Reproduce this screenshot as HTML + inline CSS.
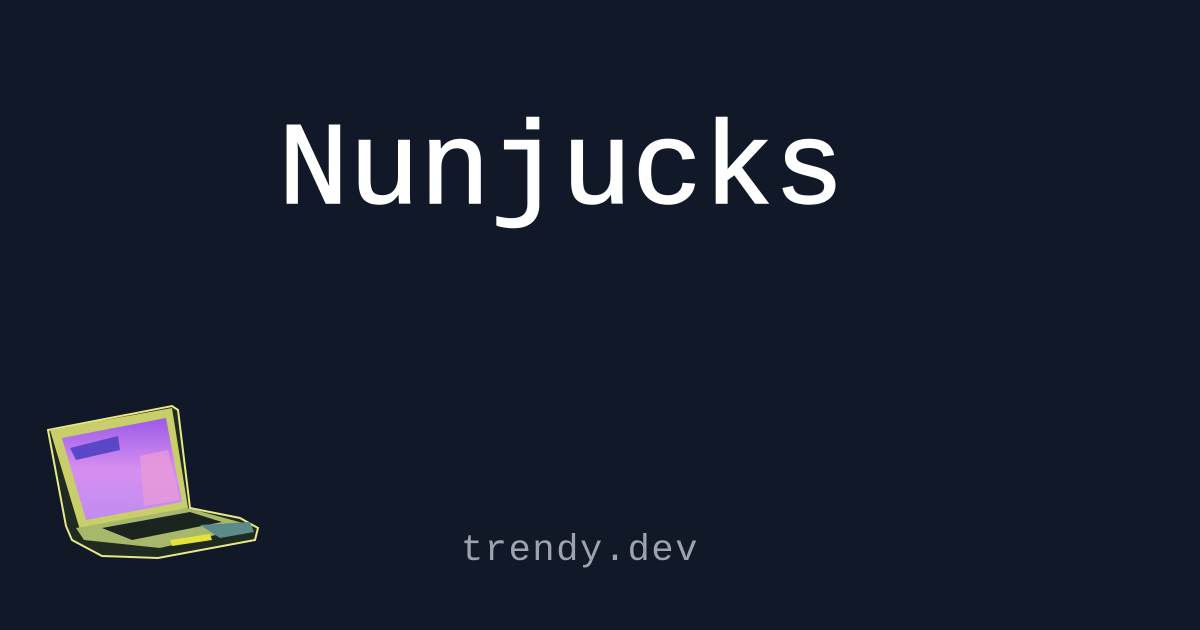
<!DOCTYPE html>
<html><head><style>
html,body{margin:0;padding:0;}
body{width:1200px;height:630px;background:#111827;position:relative;overflow:hidden;font-family:"Liberation Mono",monospace;}
.t{position:absolute;left:278px;top:103px;font-size:118px;color:#fff;line-height:140px;white-space:nowrap;-webkit-text-stroke:1.5px #fff;}
.d{position:absolute;left:461px;top:529px;font-size:37px;letter-spacing:1.6px;color:#9ca3af;line-height:44px;white-space:nowrap;}
</style></head><body>
<div class="t">Nunjucks</div>
<div class="d">trendy.dev</div>
<svg style="position:absolute;left:40px;top:400px" width="230" height="160" viewBox="0 0 230 160">
<defs><linearGradient id="g" x1="0" y1="0" x2="0" y2="1"><stop offset="0" stop-color="#9a5ae8"/><stop offset="0.5" stop-color="#d68ef0"/><stop offset="1" stop-color="#c08cf0"/></linearGradient></defs>
<polygon points="8,30 132,6 138,10 150,108 200,118 218,128 215,140 118,158 62,156 32,140 26,126" fill="#1f2a20" stroke="#e8e88a" stroke-width="2"/>
<polygon points="10,30 132,8 148,108 40,130" fill="#c9cd6a"/>
<polygon points="22,38 126,18 142,102 46,120" fill="url(#g)"/>
<polygon points="100,56 128,50 140,100 104,106" fill="#e79ad8" opacity="0.8"/>
<polygon points="30,48 78,36 80,50 36,60" fill="#5a47c8"/>
<polygon points="36,128 148,108 214,126 120,148 44,140" fill="#a8b86a"/>
<polygon points="62,128 150,112 182,122 92,140" fill="#1c2420"/>
<polygon points="160,125 210,122 214,132 180,138" fill="#5a8a8a"/>
<polygon points="130,140 170,134 172,140 132,146" fill="#e6e23a"/>
</svg>
</body></html>
